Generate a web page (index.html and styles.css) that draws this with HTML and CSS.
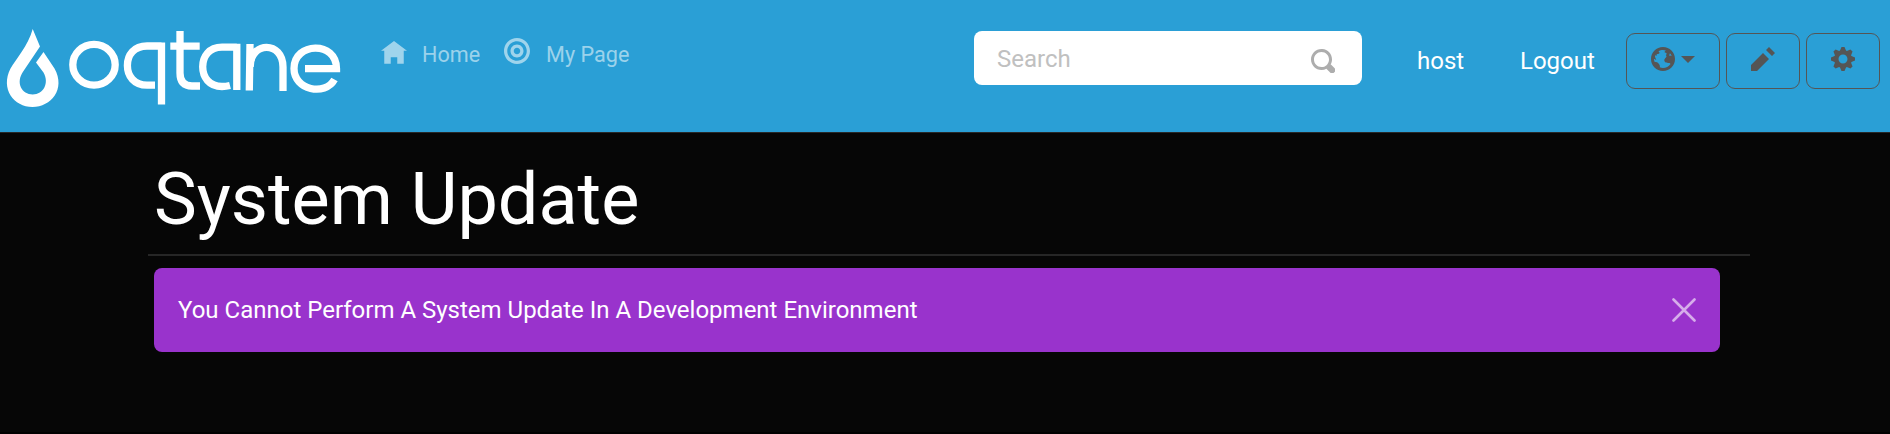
FILE: index.html
```html
<!DOCTYPE html>
<html lang="en">
<head>
<meta charset="utf-8">
<title>System Update</title>
<link rel="stylesheet" href="styles.css">
</head>
<body>
<header class="topbar">
  <a class="brand" aria-label="oqtane">
    <svg class="logo" viewBox="0 0 348 84" fill="none" stroke="#fff" stroke-width="7.3">
      <path fill="#fff" stroke="none" d="M32.700 4L40 21.500L23.500 46C15 58 22 69.500 32.700 69.500C43.500 69.500 49.500 58 43.500 47.500L36 37.500L43.500 27L54.500 43.500C66 64 51 82 32.500 82C14 82 0 64 10.500 43.500C16 34 28 21 32.700 4z"/>
      <ellipse cx="94" cy="39.700" rx="21.200" ry="20.400"/>
      <path d="M161.500 17.400V79.500M161.500 21H147C134 21 127.400 30 127.400 40.500C127.400 51 134 60.200 147 60.200H155"/>
      <path d="M180 6V48Q180 61 192 61H200M170.300 21.200H199.700"/>
      <path d="M236.800 18.700V65M236.800 22.200H222C209 22.200 202.700 31.500 202.700 41.800C202.700 52 209 61.500 222 61.500Q226 61.500 230 60.500"/>
      <path d="M249.300 65.500L250 19M250.200 42C250.200 15.700 283 15.700 283 42V66"/>
      <path d="M305 43.600H336.500C336.500 15.500 294 17 294 43.500C294 65 325 71.500 334.500 54.500"/>
    </svg>
  </a>
  <nav class="menu">
    <a class="menu-item"><svg class="icon home" viewBox="0 0 8 8"><path d="M4 0l-4 3h1v4h2v-2h2v2h2v-4.030l1 .03-4-3z"/></svg>Home</a>
    <a class="menu-item"><svg class="icon target" viewBox="0 0 8 8"><path d="M4 0c-2.200 0-4 1.800-4 4s1.800 4 4 4 4-1.800 4-4-1.800-4-4-4zm0 1c1.660 0 3 1.340 3 3s-1.340 3-3 3-3-1.340-3-3 1.340-3 3-3zm0 1c-1.100 0-2 .9-2 2s.9 2 2 2 2-.9 2-2-.9-2-2-2zm0 1c.56 0 1 .44 1 1s-.44 1-1 1-1-.44-1-1 .44-1 1-1z"/></svg>My Page</a>
  </nav>
  <div class="controls">
    <div class="search"><span>Search</span><svg class="icon" viewBox="0 0 8 8"><path d="M3.500 0c-1.930 0-3.500 1.570-3.500 3.500s1.570 3.500 3.500 3.500c.59 0 1.170-.14 1.660-.41a1 1 0 0 0 .13.130l1 1a1.020 1.020 0 1 0 1.440-1.440l-1-1a1 1 0 0 0-.16-.13c.27-.49.440-1.060.440-1.660 0-1.930-1.550-3.500-3.500-3.500zm0 1c1.390 0 2.500 1.110 2.500 2.500 0 .66-.24 1.270-.66 1.720-.01.010-.02.020-.03.030a1 1 0 0 0-.13.130c-.44.400-1.040.630-1.690.630-1.390 0-2.500-1.110-2.500-2.500s1.110-2.500 2.500-2.500z"/></svg></div>
    <a class="link host">host</a>
    <a class="link logout">Logout</a>
    <button class="btn btn-wide" aria-label="Language"><svg class="icon" viewBox="0 0 8 8"><path d="M4 0c-2.200 0-4 1.800-4 4s1.800 4 4 4 4-1.800 4-4-1.800-4-4-4zm0 1c.33 0 .64.090.940.190-.21.200-.45.380-.41.560.04.180.690.130.690.500 0 .27-.42.350-.13.660.35.350-.64.980-.66 1.440-.03.830.840.970 1.530.970.420 0 .53.200.500.440-.54.770-1.460 1.250-2.470 1.250-.38 0-.73-.09-1.060-.22.220-.44-.28-1.310-.75-1.590-.23-.23-.72-.14-1-.25-.09-.27-.18-.54-.19-.84.030-.05.080-.09.160-.09.190 0 .45.380.590.340.180-.04-.74-1.310-.31-1.560.200-.12.600.390.470-.16-.12-.51.360-.28.660-.41.260-.11.450-.41.130-.59-.06-.03-.13-.1-.22-.19.450-.27.970-.44 1.530-.44z"/><path class="land" d="M6.310 2.090c.24.270.44.560.56.910-.1.050-.24.020-.31-.07-.11-.12-.3-.1-.41.020l-.18-.23c.1-.05.2-.1.180-.22z"/></svg><span class="caret"></span></button>
    <button class="btn" aria-label="Edit"><svg class="icon" viewBox="0 0 8 8"><path d="M6 0l-1 1 2 2 1-1-2-2zm-2 2l-4 4v2h2l4-4-2-2z"/></svg></button>
    <button class="btn" aria-label="Settings"><svg class="icon" viewBox="0 0 8 8"><path d="M3.500 0l-.5 1.190c-.1.030-.19.080-.28.130l-1.190-.5-.72.720.5 1.190c-.05.100-.09.180-.13.280l-1.190.500v1l1.190.500c.04.100.080.180.130.280l-.5 1.190.720.720 1.190-.5c.09.040.180.090.280.130l.5 1.190h1l.5-1.190c.09-.04.190-.08.280-.13l1.190.500.720-.72-.5-1.190c.04-.09.090-.19.130-.28l1.190-.5v-1l-1.190-.5c-.03-.09-.08-.19-.13-.28l.5-1.190-.72-.72-1.190.500c-.09-.04-.19-.09-.28-.13l-.5-1.190h-1zm.5 2.500c.83 0 1.500.670 1.500 1.500s-.67 1.500-1.500 1.500-1.500-.67-1.500-1.500.670-1.500 1.500-1.500z"/></svg></button>
  </div>
</header>
<main class="content">
  <h1 class="title">System Update</h1>
  <hr class="rule">
  <div class="alert"><span>You Cannot Perform A System Update In A Development Environment</span>
    <svg class="close" viewBox="0 0 24 24"><path d="M1.500 1.500L22.500 22.500M22.500 1.500L1.500 22.500"/></svg></div>
</main>
<footer class="footer"></footer>
</body>
</html>
```

FILE: styles.css
```css
* { box-sizing: border-box; }
body {
  margin: 0;
  height: 434px;
  overflow: hidden;
  display: flex;
  flex-direction: column;
  background: #060606;
  color: #fff;
  font: 24px/36px Roboto, sans-serif;
}
.topbar {
  display: flex;
  align-items: flex-start;
  height: 133px;
  background: #2a9fd6;
  border-bottom: 1px solid #282828;
}
.brand { padding-top: 25px; }
.logo { display: block; width: 348px; height: 84px; }
.icon { display: block; width: 24px; height: 24px; fill: currentColor; flex: none; }
.land { fill: #2a9fd6; }
.menu {
  display: flex;
  gap: 24px;
  padding: 37px 0 0 33px;
  font-size: 21.6px;
  color: rgba(255, 255, 255, 0.55);
}
.menu-item { display: flex; gap: 16px; }
.home { width: 26px; height: 26px; margin: 4px -1px 0 0; }
.target { width: 26px; height: 26px; margin-top: 1px; }
.controls { display: flex; margin-left: auto; padding-right: 10px; }
.search {
  display: flex;
  justify-content: space-between;
  width: 388px;
  height: 54px;
  margin-top: 31px;
  padding: 10px 27px 0 23px;
  border-radius: 8px;
  background: #fff;
  color: #c0c0c0;
}
.search .icon { margin-top: 8px; color: #adadad; }
.link { padding-top: 43px; }
.host { width: 103px; margin-left: 55px; }
.logout { width: 106px; }
.btn {
  display: flex;
  justify-content: center;
  width: 74px;
  height: 56px;
  margin: 33px 0 0 6px;
  padding: 13px 0 0;
  border: 1px solid #555;
  border-radius: 9px;
  background: transparent;
  color: #555;
}
.btn-wide { width: 94px; margin-left: 0; gap: 6px; }
.caret {
  width: 14px;
  height: 7px;
  margin-top: 9px;
  background: #555;
  clip-path: polygon(0 0, 100% 0, 50% 100%);
}
.content { flex: 1; padding-left: 148px; }
.title { margin: 24px 0 0 6px; font-size: 72px; line-height: 86px; font-weight: 400; }
.rule { width: 1602px; height: 2px; margin: 11px 0 12px; border: 0; background: #262626; }
.alert {
  display: flex;
  justify-content: space-between;
  width: 1566px;
  height: 84px;
  margin-left: 6px;
  padding: 24px;
  border-radius: 8px;
  background: #93c;
}
.close { width: 24px; height: 24px; margin-top: 6px; stroke: #fff; stroke-width: 2.6; stroke-linecap: round; opacity: 0.6; }
.footer { height: 2px; background: #000; }
```
